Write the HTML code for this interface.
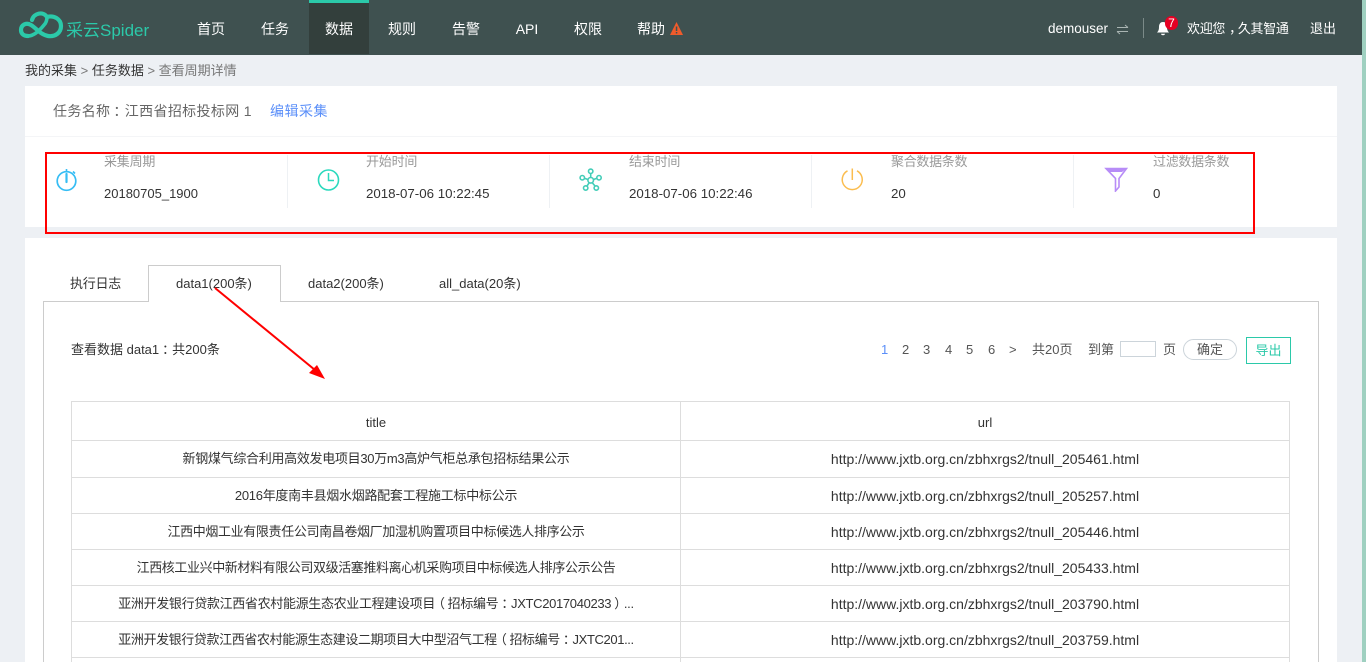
<!DOCTYPE html>
<html lang="zh"><head><meta charset="utf-8"><title>查看周期详情</title>
<style>
*{box-sizing:border-box}
html,body{margin:0;padding:0;width:1366px;height:662px;overflow:hidden;background:#edf0f4;font:13px/18px "Liberation Sans","Noto Sans CJK SC",sans-serif;color:#333}
.a{position:absolute;white-space:nowrap}
.nav{color:#fff;font-size:14px;top:20px;line-height:18px;width:60px;text-align:center}
.lb{color:#999;top:153px;letter-spacing:-.2px}
.val{color:#333;top:185px;font-size:13.300px}
.sep{position:absolute;top:155px;height:53px;width:1px;background:#eef1f4}
.pg{top:341px;color:#555}
.cell{position:absolute;text-align:center;white-space:nowrap;color:#333;line-height:18px;left:72px;width:608px}
.u{left:681px;font-size:14px}
.hl{position:absolute;left:71px;width:1219px;height:1px;background:#ddd}
.c{position:relative;left:3px}
.o{position:relative;left:-3px}
</style></head><body>
<div class="a" style="left:0;top:0;width:1366px;height:55px;background:#3f5150"></div>
<div class="a" style="left:309px;top:0;width:60px;height:54px;background:#333f3c;border-top:3px solid #2bc9a9"></div>
<svg class="a" style="left:14px;top:8px" width="54" height="36" viewBox="0 0 54 36" fill="none" stroke="#2bc9a9" stroke-linecap="round"><path d="M18 12C20 5 29 3 33 9C40 7 47 11 47 18C47 25 41 29 34 28C27 27 22 20 17 17C12 14 7 17 7 22C7 26 10 28 14 28" stroke-width="4.200"/><path d="M14 28C20 28 26 22 30 17C32 15 33 12 33 9" stroke-width="3.600"/></svg>
<div class="a" style="left:66px;top:20px;font-size:17px;line-height:22px;color:#2bc9a9">采云Spider</div>
<div class="a nav" style="left:181px">首页</div>
<div class="a nav" style="left:245px">任务</div>
<div class="a nav" style="left:309px">数据</div>
<div class="a nav" style="left:372px">规则</div>
<div class="a nav" style="left:436px">告警</div>
<div class="a nav" style="left:497px">API</div>
<div class="a nav" style="left:558px">权限</div>
<div class="a nav" style="left:621px">帮助</div>
<svg class="a" style="left:670px;top:22px" width="13" height="13" viewBox="0 0 13 13"><path d="M6.500 0L13 13H0Z" fill="#ef5b2b"/><rect x="5.800" y="4.500" width="1.500" height="4.500" fill="#3f5150"/><rect x="5.800" y="10" width="1.500" height="1.500" fill="#3f5150"/></svg>
<div class="a" style="left:1048px;top:20px;color:#fff;font-size:13.500px">demouser</div>
<svg class="a" style="left:1116px;top:24px" width="13" height="11" viewBox="0 0 13 11"><path d="M1 3.500H12M9 1L12 3.500M12 7.500H1M4 10L1 7.500" fill="none" stroke="#aab5b3" stroke-width="1"/></svg>
<div class="a" style="left:1143px;top:18px;width:1px;height:20px;background:#7b8a88"></div>
<svg class="a" style="left:1156px;top:21px" width="14" height="15" viewBox="0 0 14 15"><path d="M7 1C4 1 3 3.500 3 6C3 8.500 2.500 10 1 11.500H13C11.500 10 11 8.500 11 6C11 3.500 10 1 7 1Z" fill="#fff"/><path d="M5 12.800H9C9 14.800 5 14.800 5 12.800Z" fill="#fff"/></svg>
<div class="a" style="left:1165px;top:16px;width:13px;height:14px;border-radius:7px;background:#e60023;color:#fff;font-size:12px;line-height:14px;text-align:center">7</div>
<div class="a" style="left:1187px;top:20px;color:#fff;letter-spacing:-.3px">欢迎您<span style="position:relative;left:4px">，</span>久其智通</div>
<div class="a" style="left:1310px;top:20px;color:#fff">退出</div>
<div class="a" style="left:25px;top:62px;color:#333">我的采集 <span style="color:#777">&gt;</span> 任务数据 <span style="color:#777">&gt; 查看周期详情</span></div>
<div class="a" style="left:25px;top:86px;width:1312px;height:141px;background:#fff"></div>
<div class="a" style="left:25px;top:136px;width:1312px;height:1px;background:#f4f5f7"></div>
<div class="a" style="left:53px;top:102px;color:#666;font-size:14px;letter-spacing:.35px">任务名称<span class="c">：</span>江西省招标投标网 1</div>
<div class="a" style="left:270px;top:102px;color:#5b8ff9;font-size:14px;letter-spacing:.5px">编辑采集</div>
<svg class="a" style="left:55px;top:168px" width="24" height="24" viewBox="0 0 24 24" fill="none" stroke="#36bdf4"><circle cx="11.500" cy="13" r="9.300" stroke-width="1.700"/><path d="M11.500 1V4M18 3.500L20 5.500" stroke-width="1.600"/><path d="M11.500 6V14" stroke-width="2.200" stroke-linecap="round"/></svg>
<div class="a lb" style="left:104px">采集周期</div>
<div class="a val" style="left:104px;font-size:13px">20180705_1900</div>
<div class="sep" style="left:287px"></div>
<svg class="a" style="left:316px;top:168px" width="24" height="24" viewBox="0 0 24 24"><circle cx="12.500" cy="12" r="10" fill="none" stroke="#2bd9bd" stroke-width="1.600"/><path d="M12.500 5V12.500H18" fill="none" stroke="#2bd9bd" stroke-width="1.500"/></svg>
<div class="a lb" style="left:366px">开始时间</div>
<div class="a val" style="left:366px">2018-07-06 10:22:45</div>
<div class="sep" style="left:549px"></div>
<svg class="a" style="left:579px;top:168px" width="24" height="24" viewBox="0 0 24 24" fill="none" stroke="#44cdb8" stroke-width="1.600"><circle cx="11.700" cy="12.300" r="2.800"/><circle cx="11.700" cy="3.300" r="2.200"/><circle cx="3.300" cy="9.700" r="2.200"/><circle cx="20" cy="9.700" r="2.200"/><circle cx="6.700" cy="20" r="2.200"/><circle cx="17.300" cy="20" r="2.200"/><path d="M11.700 5.500V9.500M5.400 10.300L9 11.500M17.900 10.300L14.400 11.500M8 18L10.200 14.700M16 18L13.300 14.700"/></svg>
<div class="a lb" style="left:629px">结束时间</div>
<div class="a val" style="left:629px">2018-07-06 10:22:46</div>
<div class="sep" style="left:811px"></div>
<svg class="a" style="left:840px;top:168px" width="24" height="24" viewBox="0 0 24 24" fill="none" stroke="#fbbd4f" stroke-width="1.500"><path d="M7.500 2.800A10 10 0 1 0 17 2.800"/><path d="M12.300 0.500V12"/></svg>
<div class="a lb" style="left:891px;letter-spacing:-.3px">聚合数据条数</div>
<div class="a val" style="left:891px">20</div>
<div class="sep" style="left:1073px"></div>
<svg class="a" style="left:1104px;top:167px" width="25" height="25" viewBox="0 0 25 25"><path d="M2 1.500H22.500L15 11.500V20L11.500 24V11.500Z" fill="none" stroke="#b78cf7" stroke-width="1.600"/><path d="M2 1.500H22.500L18 5H6Z" fill="#b78cf7"/></svg>
<div class="a lb" style="left:1153px;letter-spacing:-.3px">过滤数据条数</div>
<div class="a val" style="left:1153px">0</div>
<div class="a" style="left:25px;top:238px;width:1312px;height:424px;background:#fff"></div>
<div class="a" style="left:43px;top:301px;width:1276px;height:361px;border:1px solid #ccc;border-bottom:0"></div>
<div class="a" style="left:148px;top:265px;width:133px;height:37px;background:#fff;border:1px solid #ccc;border-bottom:0"></div>
<div class="a" style="left:70px;top:275px;letter-spacing:-.25px">执行日志</div>
<div class="a" style="left:176px;top:275px">data1(200条)</div>
<div class="a" style="left:308px;top:275px">data2(200条)</div>
<div class="a" style="left:439px;top:275px">all_data(20条)</div>
<div class="a" style="left:71px;top:341px">查看数据 data1<span class="c">：</span>共200条</div>
<div class="a pg" style="left:881px;color:#5b8ff9">1</div>
<div class="a pg" style="left:902px">2</div>
<div class="a pg" style="left:923px">3</div>
<div class="a pg" style="left:945px">4</div>
<div class="a pg" style="left:966px">5</div>
<div class="a pg" style="left:988px">6</div>
<div class="a pg" style="left:1009px">&gt;</div>
<div class="a pg" style="left:1032px">共20页</div>
<div class="a pg" style="left:1088px">到第</div>
<div class="a" style="left:1120px;top:341px;width:36px;height:16px;border:1px solid #ccd4da"></div>
<div class="a pg" style="left:1163px">页</div>
<div class="a" style="left:1183px;top:339px;width:54px;height:21px;border:1px solid #ccd4da;border-radius:11px;text-align:center;line-height:20px;color:#555">确定</div>
<div class="a" style="left:1246px;top:337px;width:45px;height:27px;border:1px solid #2bc9a9;text-align:center;line-height:26px;color:#2bc9a9">导出</div>
<div class="a" style="left:71px;top:401px;width:1219px;height:261px;border:1px solid #ddd;border-bottom:0"></div>
<div class="a" style="left:680px;top:401px;width:1px;height:261px;background:#ddd"></div>
<div class="hl" style="top:440px"></div>
<div class="hl" style="top:477px"></div>
<div class="hl" style="top:513px"></div>
<div class="hl" style="top:549px"></div>
<div class="hl" style="top:585px"></div>
<div class="hl" style="top:621px"></div>
<div class="hl" style="top:657px"></div>
<div class="cell" style="top:414px">title</div>
<div class="cell u" style="top:414px;font-size:13px">url</div>
<div class="cell" style="top:450px;letter-spacing:-.3px">新钢煤气综合利用高效发电项目30万m3高炉气柜总承包招标结果公示</div>
<div class="cell u" style="top:450px">http://www.jxtb.org.cn/zbhxrgs2/tnull_205461.html</div>
<div class="cell" style="top:487px;letter-spacing:-.28px">2016年度南丰县烟水烟路配套工程施工标中标公示</div>
<div class="cell u" style="top:487px">http://www.jxtb.org.cn/zbhxrgs2/tnull_205257.html</div>
<div class="cell" style="top:523px;letter-spacing:-.36px">江西中烟工业有限责任公司南昌卷烟厂加湿机购置项目中标候选人排序公示</div>
<div class="cell u" style="top:523px">http://www.jxtb.org.cn/zbhxrgs2/tnull_205446.html</div>
<div class="cell" style="top:559px;letter-spacing:-.4px">江西核工业兴中新材料有限公司双级活塞推料离心机采购项目中标候选人排序公示公告</div>
<div class="cell u" style="top:559px">http://www.jxtb.org.cn/zbhxrgs2/tnull_205433.html</div>
<div class="cell" style="top:595px;letter-spacing:-.33px">亚洲开发银行贷款江西省农村能源生态农业工程建设项目<span class="o">（</span>招标编号<span class="c">：</span>JXTC2017040233<span class="c">）</span>...</div>
<div class="cell u" style="top:595px">http://www.jxtb.org.cn/zbhxrgs2/tnull_203790.html</div>
<div class="cell" style="top:631px;letter-spacing:-.38px">亚洲开发银行贷款江西省农村能源生态建设二期项目大中型沼气工程<span class="o">（</span>招标编号<span class="c">：</span>JXTC201...</div>
<div class="cell u" style="top:631px">http://www.jxtb.org.cn/zbhxrgs2/tnull_203759.html</div>
<div class="a" style="left:45px;top:152px;width:1210px;height:82px;border:2px solid #f00"></div>
<svg class="a" style="left:210px;top:285px" width="120" height="100" viewBox="0 0 120 100"><path d="M5 3L105 85" stroke="#f00" stroke-width="2" fill="none"/><path d="M115 94L99 88L107 80Z" fill="#f00"/></svg>
<div class="a" style="left:1362px;top:0;width:4px;height:662px;background:#9fd0c0"></div>
</body></html>
